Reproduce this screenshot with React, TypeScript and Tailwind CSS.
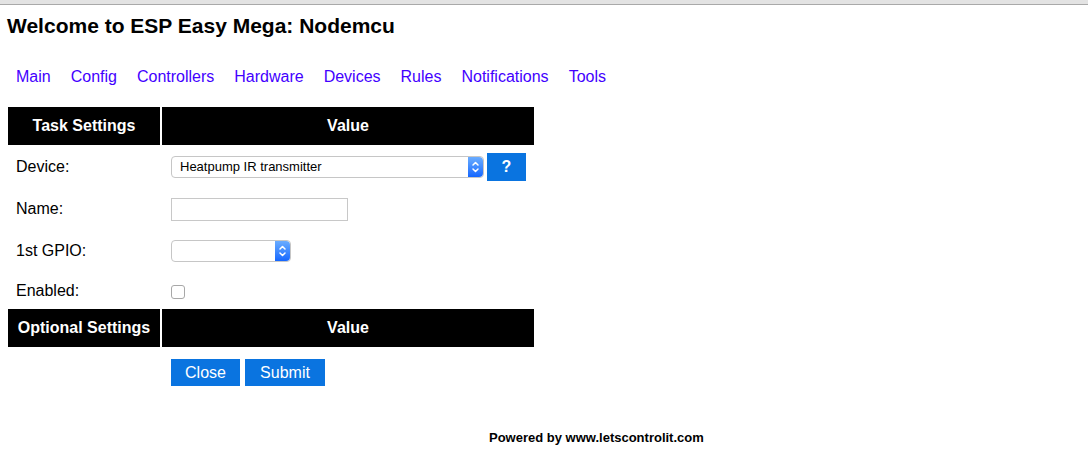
import React from "react";

const font = { fontFamily: '"Liberation Sans", Arial, Helvetica, sans-serif' };

function Stepper() {
  return (
    <div className="flex h-full w-[15px] items-center justify-center rounded-r-[4px] bg-gradient-to-b from-[#6aacff] to-[#1466ff]">
      <svg width="9" height="14" viewBox="0 0 9 14" fill="none" stroke="white" strokeWidth="1.5" strokeLinecap="round" strokeLinejoin="round">
        <path d="M2 5 L4.5 2.5 L7 5" />
        <path d="M2 9 L4.5 11.5 L7 9" />
      </svg>
    </div>
  );
}

function HeaderRow({ left }: { left: string }) {
  return (
    <div className="flex h-[38px] gap-[2px]">
      <div className="flex w-[152px] items-center justify-center bg-black text-[16px] font-bold text-white">{left}</div>
      <div className="flex w-[372px] items-center justify-center bg-black text-[16px] font-bold text-white">Value</div>
    </div>
  );
}

function Row({ label, h, children }: { label: string; h: string; children?: React.ReactNode }) {
  return (
    <div className={`flex ${h} items-center`}>
      <div className="w-[154px] pl-[8px] text-[16px] text-black">{label}</div>
      <div className="flex items-center pl-[9px]">{children}</div>
    </div>
  );
}

export default function App() {
  const links = ["Main", "Config", "Controllers", "Hardware", "Devices", "Rules", "Notifications", "Tools"];
  return (
    <div className="h-[474px] w-[1088px] overflow-hidden bg-white" style={font}>
      <div className="h-[5px] border-b border-[#a9a9a9] bg-[#e3e3e3]" />
      <h1 className="mt-[9px] pl-[7px] text-[21px] font-bold leading-[24px] text-black">Welcome to ESP Easy Mega: Nodemcu</h1>
      <nav className="mt-[29px] flex pl-[6px] text-[16px] leading-[20px] text-[#4300ff]">
        {links.map((l) => (
          <a key={l} className="px-[10px]" href="#">
            {l}
          </a>
        ))}
      </nav>
      <div className="ml-[8px] mt-[20px] w-[526px]">
        <HeaderRow left="Task Settings" />
        <Row label="Device:" h="h-[43px]">
          <div className="flex h-[22px] w-[313px] items-stretch rounded-[4px] border border-[#c6c6c6] bg-white">
            <div className="flex flex-1 items-center pl-[8px] text-[13px] text-black">Heatpump IR transmitter</div>
            <Stepper />
          </div>
          <button className="ml-[3px] flex h-[28px] w-[39px] items-center justify-center bg-[#0a74e0] text-[16px] font-bold text-white">?</button>
        </Row>
        <Row label="Name:" h="h-[42px]">
          <div className="h-[23px] w-[177px] border border-[#c8c8c8] bg-white" />
        </Row>
        <Row label="1st GPIO:" h="h-[42px]">
          <div className="flex h-[22px] w-[120px] items-stretch rounded-[4px] border border-[#c6c6c6] bg-white">
            <div className="flex-1" />
            <Stepper />
          </div>
        </Row>
        <Row label="Enabled:" h="h-[37px]">
          <div className="mt-[2px] h-[14px] w-[14px] rounded-[3px] border border-[#a8a8a8] bg-white" />
        </Row>
        <HeaderRow left="Optional Settings" />
        <div className="flex h-[51px] items-center pl-[163px]">
          <button className="flex h-[27px] w-[69px] items-center justify-center bg-[#0a74e0] text-[16px] text-white">Close</button>
          <button className="ml-[5px] flex h-[27px] w-[80px] items-center justify-center bg-[#0a74e0] text-[16px] text-white">Submit</button>
        </div>
      </div>
      <div className="mt-[32px] pl-[489px] text-[13px] font-bold leading-[16px] text-black">Powered by www.letscontrolit.com</div>
    </div>
  );
}
